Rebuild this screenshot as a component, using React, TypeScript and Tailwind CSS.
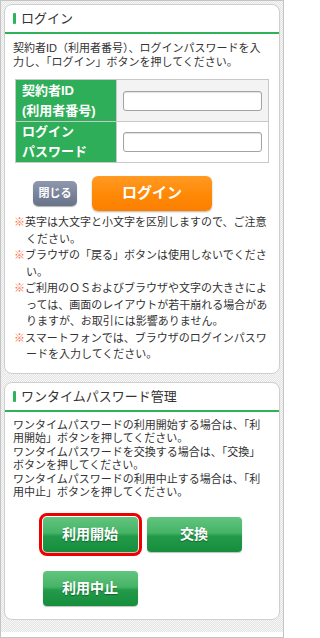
import React from "react";

const font = "font-['Liberation_Sans','Noto_Sans_CJK_JP',sans-serif]";

function CardHeader({ title }: { title: string }) {
  return (
    <div className="flex h-[29px] items-center border-b-2 border-[#2eb25a] pl-[8px]">
      <span className="h-[11px] w-[3px] rounded-[1px] bg-[#2eb25a]" />
      <span className="ml-[5px] text-[13px] leading-none text-[#333]">{title}</span>
    </div>
  );
}

function Note({ lines }: { lines: string[] }) {
  return (
    <p className="whitespace-nowrap pl-[12px] -indent-[12px] text-[11px] leading-[16.5px] text-[#333]">
      <span className="text-[#ff6a3a]">※</span>
      {lines.map((l, i) => (
        <React.Fragment key={i}>
          {i > 0 && <br />}
          {l}
        </React.Fragment>
      ))}
    </p>
  );
}

function GreenButton({ label, highlighted }: { label: string; highlighted?: boolean }) {
  return (
    <button
      className={
        "h-[35px] w-[95px] rounded-[4px] bg-[linear-gradient(to_bottom,#62c480_0%,#46b466_45%,#23994a_55%,#158f3c_100%)] text-[14px] font-bold text-white shadow-[0_1px_1px_rgba(0,0,0,0.25)] [text-shadow:0_1px_1px_rgba(0,0,0,0.35)] " +
        (highlighted ? "outline-[3px] outline-solid outline-offset-[1px] outline-[#ee0000]" : "")
      }
    >
      {label}
    </button>
  );
}

export default function App() {
  return (
    <div className={`h-[638px] w-[284px] border border-[#c4c4c4] bg-white ${font}`}>
      <div className="flex flex-col gap-[8px] bg-[conic-gradient(#e4e4e4_25%,#f7f7f7_0_50%,#e4e4e4_0_75%,#f7f7f7_0)] bg-[length:2px_2px] px-[3px] pb-[12px] pt-[3px]">
        {/* Login card */}
        <section className="rounded-[8px] border border-[#cfcfcf] bg-white">
          <CardHeader title="ログイン" />
          <div className="px-[8px] pb-[10px] pt-[8px]">
            <p className="whitespace-nowrap text-[11px] leading-[13.5px] text-[#333]">
              契約者ID（利用者番号）、ログインパスワードを入
              <br />
              力し、「ログイン」ボタンを押してください。
            </p>
            <table className="ml-[2px] mt-[10px] w-[254px] border-collapse">
              <tbody>
                <tr className="h-[42px]">
                  <th className="w-[101px] border border-[#c8c8c8] bg-[#2eae58] pl-[6px] text-left align-middle text-[13px] font-bold leading-[20px] text-white">
                    契約者ID
                    <br />
                    (利用者番号)
                  </th>
                  <td className="border border-[#c8c8c8] bg-[conic-gradient(#ececec_25%,#fafafa_0_50%,#ececec_0_75%,#fafafa_0)] bg-[length:2px_2px] pl-[6px] pr-[5px] align-middle">
                    <input
                      type="text"
                      className="block h-[20px] w-[139px] rounded-[3px] border border-[#a3a3a3] bg-white shadow-[inset_0_1px_1px_rgba(0,0,0,0.12)] outline-none"
                    />
                  </td>
                </tr>
                <tr className="h-[40px]">
                  <th className="border border-[#c8c8c8] bg-[#2eae58] pl-[6px] text-left align-middle text-[13px] font-bold leading-[20px] text-white">
                    ログイン
                    <br />
                    パスワード
                  </th>
                  <td className="border border-[#c8c8c8] bg-white pl-[6px] pr-[5px] align-middle">
                    <input
                      type="password"
                      className="block h-[20px] w-[139px] rounded-[3px] border border-[#a3a3a3] bg-white shadow-[inset_0_1px_1px_rgba(0,0,0,0.12)] outline-none"
                    />
                  </td>
                </tr>
              </tbody>
            </table>
            <div className="ml-[20px] mt-[13px] flex items-center gap-[15px]">
              <button className="h-[25px] w-[44px] rounded-[5px] bg-[linear-gradient(to_bottom,#8f99ae_0%,#7a849b_50%,#687289_100%)] text-[11px] font-bold text-white shadow-[0_1px_1px_rgba(0,0,0,0.3)]">
                閉じる
              </button>
              <button className="h-[35px] w-[120px] rounded-[6px] bg-[linear-gradient(to_bottom,#ff9a22_0%,#ff8a08_50%,#fb7f00_100%)] text-[15px] font-bold text-white shadow-[0_1px_2px_rgba(0,0,0,0.3)]">
                ログイン
              </button>
            </div>
            <div className="ml-[1px] mt-[3px]">
              <Note lines={["英字は大文字と小文字を区別しますので、ご注意", "ください。"]} />
              <Note lines={["ブラウザの「戻る」ボタンは使用しないでくださ", "い。"]} />
              <Note
                lines={[
                  "ご利用のＯＳおよびブラウザや文字の大きさによ",
                  "っては、画面のレイアウトが若干崩れる場合があ",
                  "りますが、お取引には影響ありません。",
                ]}
              />
              <Note lines={["スマートフォンでは、ブラウザのログインパスワ", "ードを入力してください。"]} />
            </div>
          </div>
        </section>

        {/* One-time password card */}
        <section className="rounded-[8px] border border-[#cfcfcf] bg-white">
          <CardHeader title="ワンタイムパスワード管理" />
          <div className="px-[8px] pb-[13px] pt-[7px]">
            <p className="whitespace-nowrap text-[11px] leading-[13.5px] text-[#333]">
              ワンタイムパスワードの利用開始する場合は、「利
              <br />
              用開始」ボタンを押してください。
              <br />
              ワンタイムパスワードを交換する場合は、「交換」
              <br />
              ボタンを押してください。
              <br />
              ワンタイムパスワードの利用中止する場合は、「利
              <br />
              用中止」ボタンを押してください。
            </p>
            <div className="mt-[17px] grid grid-cols-[95px_95px] justify-center gap-x-[9px] gap-y-[19px]">
              <GreenButton label="利用開始" highlighted />
              <GreenButton label="交換" />
              <GreenButton label="利用中止" />
            </div>
          </div>
        </section>
      </div>
    </div>
  );
}
